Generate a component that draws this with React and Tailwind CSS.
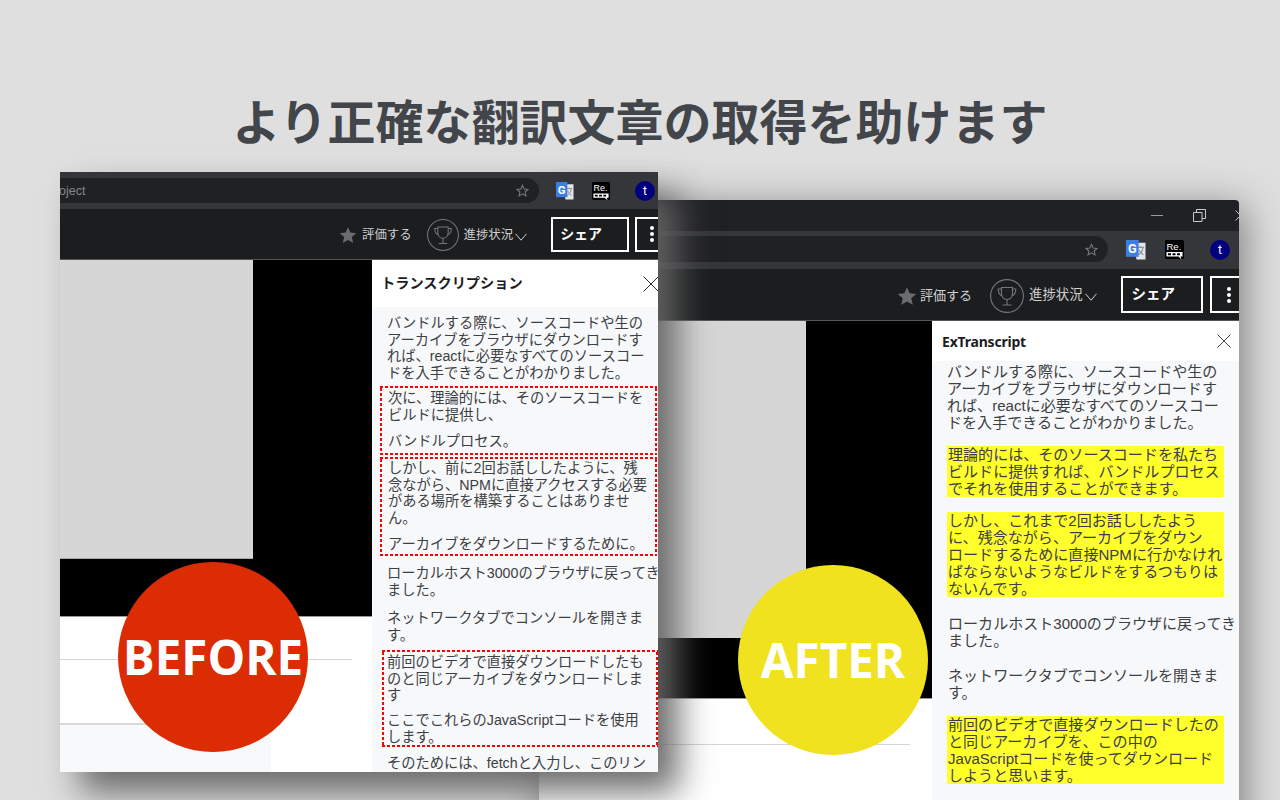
const Star = ({ s = 18 }) => (
  <svg width={s} height={s} viewBox="0 0 24 24" fill="#6a6c70"><polygon points="12,1.5 15.2,8.8 23,9.6 17.1,14.8 18.9,22.6 12,18.5 5.1,22.6 6.9,14.8 1,9.6 8.8,8.8" /></svg>
);
const OutlineStar = () => (
  <svg width="13" height="13" viewBox="0 0 24 24" fill="none" stroke="#77797d" strokeWidth="2"><polygon points="12,2.5 15,9.2 22.2,10 16.8,14.8 18.4,22 12,18.2 5.6,22 7.2,14.8 1.8,10 9,9.2" /></svg>
);
const Trophy = ({ d = 31 }) => (
  <svg width={d} height={d} viewBox="0 0 34 34" fill="none" stroke="#75777a" strokeWidth="1.1" className="shrink-0">
    <circle cx="17" cy="17" r="16.4" />
    <path d="M11.5 8.5h11v6c0 3.6-2.4 6-5.5 6s-5.500-2.400-5.500-6z" />
    <path d="M11.500 10H8.200c0 3.800 1.300 6 4 6.800M22.500 10h3.300c0 3.800-1.300 6-4 6.800M17 20.500v5M12.500 26h9" />
  </svg>
);
const Chevron = ({ w = 12 }) => (
  <svg width={w} height="8" viewBox="0 0 12 8" fill="none" stroke="#d0d1d2" strokeWidth="1"><path d="M.5.8 6 7.200 11.500.8" /></svg>
);
const Close = ({ s = 16 }) => (
  <svg width={s} height={s} viewBox="0 0 16 16" fill="none" stroke="#2a2a2a" strokeWidth="1" className="shrink-0"><path d="M.5.5l15 15M15.500.5l-15 15" /></svg>
);
const GT = ({ s = 19 }) => (
  <svg width={s} height={s} viewBox="0 0 19 19" className="shrink-0">
    <path d="M7 2.500h11.500v16H10z" fill="#e3e5e8" />
    <path d="M11 7h6M14 6v1.500M12 14c2.500-1.500 3.800-3.500 4-6.500M12.500 9.500c.8 2 2 3.500 4 4.500" stroke="#8b8f94" strokeWidth="1" fill="none" />
    <rect x="0" y="0" width="12" height="16" fill="#3b7ee4" />
    <text x="6" y="12.500" textAnchor="middle" fontSize="12" fontWeight="700" fontFamily="Roboto, sans-serif" fill="#fff">G</text>
  </svg>
);
const Re = ({ s = 19 }) => (
  <svg width={s} height={s + 1} viewBox="0 0 19 20" className="shrink-0">
    <rect width="19" height="19" rx="1.500" fill="#000" />
    <text x="1.500" y="9.500" fontSize="9.500" fontFamily="'Liberation Sans', sans-serif" fill="#fff">Re.</text>
    <path d="M1.500 12h16v4.500h-2l1 3-3-3h-12z" fill="#fff" />
    <path d="M3 13.300h3v2H3zM7.500 13.300h3v2h-3zM12 13.300h3v2h-3z" fill="#000" />
  </svg>
);
const Avatar = ({ cls }) => (
  <div className={`rounded-full bg-[#00007f] text-white flex items-center justify-center shrink-0 text-[12px] font-['Roboto',sans-serif] ${cls}`}>t</div>
);
const Dots = () => (
  <div className="flex flex-col gap-[2px]">
    <span className="w-[4px] h-[4px] rounded-full bg-white" />
    <span className="w-[4px] h-[4px] rounded-full bg-white" />
    <span className="w-[4px] h-[4px] rounded-full bg-white" />
  </div>
);
const dash = "border-2 border-transparent [background-image:linear-gradient(90deg,#f00_60%,transparent_60%),linear-gradient(90deg,#f00_60%,transparent_60%),linear-gradient(0deg,#f00_60%,transparent_60%),linear-gradient(0deg,#f00_60%,transparent_60%)] [background-size:5px_2px,5px_2px,2px_5px,2px_5px] [background-position:0_0,0_100%,0_0,100%_0] [background-repeat:repeat-x,repeat-x,repeat-y,repeat-y] [background-origin:border-box]";

export default function App() {
  return (
    <div className="relative w-[1280px] h-[800px] overflow-hidden bg-[#dfdfdf] font-['Liberation_Sans','Noto_Sans_CJK_JP',sans-serif]">
      <h1 className="pt-[88px] text-center text-[48px] leading-[62px] font-bold text-[#42454a] font-['Noto_Sans_CJK_JP',sans-serif]">
        より正確な翻訳文章の取得を助けます
      </h1>

      {/* back window */}
      <div className="absolute left-[539px] top-[200px] w-[700px] h-[660px] rounded-t-[4px] flex flex-col overflow-hidden shadow-[6px_6px_38px_rgba(110,110,110,0.85)]">
        <div className="h-[31px] bg-[#202124] shrink-0 flex items-center justify-end">
          <div className="w-[12px] h-[1px] bg-[#9a9b9d] mr-[30px]" />
          <svg width="13" height="13" viewBox="0 0 13 13" fill="none" stroke="#c8c9ca" strokeWidth="1" className="mr-[29px]"><path d="M.5 3.500h8.500v9H.500zM3.500 3.500V.5h9v9H9" /></svg>
          <svg width="6" height="11" viewBox="0 0 6 11" fill="none" stroke="#c8c9ca" strokeWidth="1" className="mr-[-2px]"><path d="M.5.5l5 5M.5 10.500l5-5" /></svg>
        </div>
        <div className="h-[38px] bg-[#35363a] shrink-0 flex items-start pt-[5px]">
          <div className="w-[569px] h-[26px] bg-[#202124] rounded-r-full flex items-center justify-end pr-[10px]"><OutlineStar /></div>
          <div className="ml-[18px] mt-[4px]"><GT s={20} /></div>
          <div className="ml-[19px] mt-[4px]"><Re s={19} /></div>
          <Avatar cls="ml-[26px] mt-[4px] w-[20px] h-[20px]" />
        </div>
        <div className="h-[52px] bg-[#1c1d1f] border-b border-[#555] shrink-0 flex items-center overflow-hidden text-[13px] text-[#cfd0d1] pt-[2px]">
          <div className="ml-[358px]"><Star s={20} /></div>
          <span className="ml-[3px] whitespace-nowrap">評価する</span>
          <div className="ml-[18px]"><Trophy d={34} /></div>
          <span className="ml-[5px] whitespace-nowrap text-[13.400px]">進捗状況</span>
          <div className="ml-[2px] mt-[3px]"><Chevron /></div>
          <div className="ml-[24px] mt-[-2px] w-[82px] h-[37px] border-2 border-white flex items-center pl-[9px] text-[14.500px] font-bold text-white shrink-0">シェア</div>
          <div className="ml-[7px] mt-[-2px] w-[40px] h-[37px] border-2 border-white flex items-center pl-[15px] shrink-0"><Dots /></div>
        </div>
        <div className="flex-1 flex min-h-0 bg-white">
          <div className="w-[393px] shrink-0 flex flex-col">
            <div className="h-[378px] bg-black shrink-0 flex flex-col border-b border-[#999]">
              <div className="w-[267px] h-[317px] bg-[#d6d6d6]" />
            </div>
            <div className="mt-[45px] w-[371px] h-[1px] bg-[#d4d4d4]" />
          </div>
          <div className="w-[307px] shrink-0 flex flex-col">
            <div className="h-[40px] bg-white flex items-center justify-between pl-[10px] pr-[8px] shrink-0">
              <span className="text-[14px] font-bold text-[#1c1d1f] font-['Noto_Sans',sans-serif] tracking-[-0.2px]">ExTranscript</span>
              <Close s={14} />
            </div>
            <div className="flex-1 bg-[#f7f8fa] pl-[15px] pt-[1.500px] text-[15.050px] leading-[17px] text-[#3d4043] whitespace-nowrap overflow-hidden">
              <p>バンドルする際に、ソースコードや生の<br />アーカイブをブラウザにダウンロードす<br />れば、reactに必要なすべてのソースコー<br />ドを入手できることがわかりました。</p>
              <p className="mt-[15.500px] w-[277px] pl-[1px] bg-[#ffff2b]">理論的には、そのソースコードを私たち<br />ビルドに提供すれば、バンドルプロセス<br />でそれを使用することができます。</p>
              <p className="mt-[15px] w-[277px] pl-[1px] bg-[#ffff2b]">しかし、これまで2回お話ししたよう<br />に、残念ながら、アーカイブをダウン<br />ロードするために直接NPMに行かなけれ<br />ばならないようなビルドをするつもりは<br />ないんです。</p>
              <p className="mt-[17.500px] pl-[1px]">ローカルホスト3000のブラウザに戻ってき<br />ました。</p>
              <p className="mt-[18px] pl-[1px]">ネットワークタブでコンソールを開きま<br />す。</p>
              <p className="mt-[15.500px] w-[277px] pl-[1px] bg-[#ffff2b]">前回のビデオで直接ダウンロードしたの<br />と同じアーカイブを、この中の<br />JavaScriptコードを使ってダウンロード<br />しようと思います。</p>
            </div>
          </div>
        </div>
      </div>

      {/* front window */}
      <div className="absolute left-[60px] top-[172px] w-[598px] h-[600px] flex flex-col overflow-hidden shadow-[20px_20px_32px_rgba(100,100,100,0.95)]">
        <div className="h-[37px] bg-[#35363a] shrink-0 flex items-start pt-[6px]">
          <div className="w-[479px] h-[25px] bg-[#202124] rounded-r-full flex items-center justify-between pr-[10px] text-[12.500px] text-[#85878b]">
            <span className="ml-[-1px] pt-[2px]">oject</span>
            <OutlineStar />
          </div>
          <div className="ml-[17px] mt-[4px]"><GT s={18} /></div>
          <div className="ml-[18px] mt-[4px]"><Re s={18} /></div>
          <Avatar cls="ml-[25px] mt-[3px] w-[20px] h-[20px]" />
        </div>
        <div className="h-[51px] bg-[#1c1d1f] border-b border-[#555] shrink-0 flex items-center overflow-hidden text-[12.400px] text-[#cfd0d1] pt-[2px]">
          <div className="ml-[279px]"><Star s={18} /></div>
          <span className="ml-[5px] whitespace-nowrap">評価する</span>
          <div className="ml-[15px]"><Trophy d={32} /></div>
          <span className="ml-[5px] whitespace-nowrap">進捗状況</span>
          <div className="ml-[2px] mt-[3px]"><Chevron /></div>
          <div className="ml-[24px] mt-[-2px] w-[78px] h-[35px] border-2 border-white flex items-center pl-[7px] text-[14px] font-bold text-white shrink-0">シェア</div>
          <div className="ml-[6px] mt-[-2px] w-[40px] h-[35px] border-2 border-white flex items-center pl-[13px] shrink-0"><Dots /></div>
        </div>
        <div className="flex-1 flex min-h-0 bg-white overflow-hidden">
          <div className="w-[312px] shrink-0 flex flex-col">
            <div className="h-[357px] bg-black shrink-0 border-b border-[#999]">
              <div className="w-[193px] h-[299px] bg-[#d6d6d6] border-b border-[#aaa]" />
            </div>
            <div className="mt-[42px] w-[292px] h-[1px] bg-[#d4d4d4]" />
            <div className="mt-[63px] w-[211px] h-[2px] bg-[#d8d8d8]" />
            <div className="flex-1 w-[211px] bg-[#f7f9fa]" />
          </div>
          <div className="w-[286px] shrink-0 flex flex-col">
            <div className="h-[47px] bg-white flex items-center justify-between pl-[10px] shrink-0 overflow-hidden">
              <span className="text-[14.200px] font-bold text-[#1c1d1f] ml-[-1px]">トランスクリプション</span>
              <div className="mr-[-1px]"><Close s={16} /></div>
            </div>
            <div className="flex-1 bg-[#f7f8fa] pl-[15px] pt-[8px] text-[14.250px] leading-[16.500px] text-[#3d4043] whitespace-nowrap overflow-hidden">
              <p>バンドルする際に、ソースコードや生の<br />アーカイブをブラウザにダウンロードす<br />れば、reactに必要なすべてのソースコー<br />ドを入手できることがわかりました。</p>
              <div className={`mt-[5px] ml-[-7px] w-[277px] pl-[6px] pt-[2px] pb-[3px] ${dash}`}>
                <p>次に、理論的には、そのソースコードを<br />ビルドに提供し、</p>
                <p className="mt-[10px]">バンドルプロセス。</p>
              </div>
              <div className={`mt-[2.500px] ml-[-7px] w-[277px] pl-[6px] pt-[1px] pb-[1px] ${dash}`}>
                <p>しかし、前に2回お話ししたように、残<br />念ながら、NPMに直接アクセスする必要<br />がある場所を構築することはありませ<br />ん。</p>
                <p className="mt-[10px]">アーカイブをダウンロードするために。</p>
              </div>
              <p className="mt-[9.500px]">ローカルホスト3000のブラウザに戻ってき<br />ました。</p>
              <p className="mt-[12px]">ネットワークタブでコンソールを開きま<br />す。</p>
              <div className={`mt-[6.500px] ml-[-5px] w-[276px] pl-[3px] pt-[2.500px] ${dash}`}>
                <p>前回のビデオで直接ダウンロードしたも<br />のと同じアーカイブをダウンロードしま<br />す</p>
                <p className="mt-[8.500px]">ここでこれらのJavaScriptコードを使用<br />します。</p>
              </div>
              <p className="mt-[8px]">そのためには、fetchと入力し、このリン</p>
            </div>
          </div>
        </div>
      </div>

      {/* badges */}
      <div className="absolute left-[118px] top-[562px] w-[190px] h-[190px] rounded-full bg-[#db2c03] flex items-center justify-center text-white text-[47.500px] font-bold font-['Open_Sans',sans-serif]">BEFORE</div>
      <div className="absolute left-[738px] top-[565px] w-[190px] h-[190px] rounded-full bg-[#f0e21e] flex items-center justify-center text-white text-[47.500px] font-bold font-['Open_Sans',sans-serif]">AFTER</div>
    </div>
  );
}
